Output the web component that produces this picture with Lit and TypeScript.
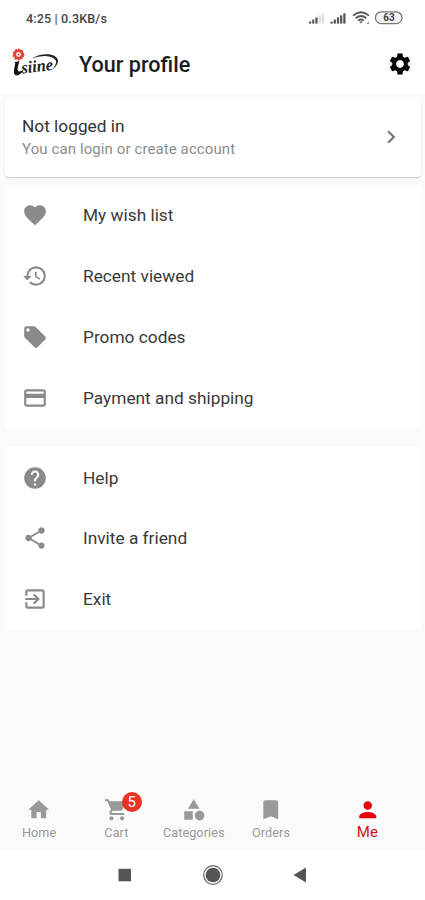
import { LitElement, html, css, svg } from "lit";
import { customElement, property } from "lit/decorators.js";

const PATHS: Record<string, string> = {
  heart: "M12 21.35l-1.45-1.32C5.4 15.36 2 12.28 2 8.5 2 5.42 4.42 3 7.5 3c1.74 0 3.41.81 4.5 2.09C13.09 3.81 14.76 3 16.5 3 19.58 3 22 5.42 22 8.5c0 3.78-3.4 6.86-8.55 11.54L12 21.35z",
  history: "M13 3a9 9 0 0 0-9 9H1l3.89 3.89.07.14L9 12H6c0-3.87 3.13-7 7-7s7 3.13 7 7-3.13 7-7 7c-1.93 0-3.68-.79-4.94-2.06l-1.42 1.42A8.954 8.954 0 0 0 13 21a9 9 0 0 0 0-18zm-1 5v5l4.28 2.54.72-1.21-3.5-2.08V8H12z",
  tag: "M21.41 11.58l-9-9C12.05 2.22 11.55 2 11 2H4c-1.1 0-2 .9-2 2v7c0 .55.22 1.05.59 1.42l9 9c.36.36.86.58 1.41.58.55 0 1.05-.22 1.41-.59l7-7c.37-.36.59-.86.59-1.41 0-.55-.23-1.06-.59-1.42zM5.5 7C4.67 7 4 6.33 4 5.5S4.67 4 5.5 4 7 4.67 7 5.5 6.33 7 5.5 7z",
  card: "M20 4H4c-1.11 0-1.99.89-1.99 2L2 18c0 1.11.89 2 2 2h16c1.11 0 2-.89 2-2V6c0-1.11-.89-2-2-2zm0 14H4v-6h16v6zm0-10H4V6h16v2z",
  help: "M12 2C6.48 2 2 6.48 2 12s4.48 10 10 10 10-4.48 10-10S17.52 2 12 2zm1 17h-2v-2h2v2zm2.07-7.75l-.9.92C13.45 12.9 13 13.5 13 15h-2v-.5c0-1.1.45-2.1 1.17-2.83l1.24-1.26c.37-.36.59-.86.59-1.41 0-1.1-.9-2-2-2s-2 .9-2 2H8c0-2.21 1.79-4 4-4s4 1.79 4 4c0 .88-.36 1.68-.93 2.25z",
  share: "M18 16.08c-.76 0-1.44.3-1.96.77L8.91 12.7c.05-.23.09-.46.09-.7s-.04-.47-.09-.7l7.05-4.11c.54.5 1.25.81 2.04.81 1.66 0 3-1.34 3-3s-1.34-3-3-3-3 1.34-3 3c0 .24.04.47.09.7L8.04 9.81C7.5 9.31 6.79 9 6 9c-1.66 0-3 1.34-3 3s1.34 3 3 3c.79 0 1.5-.31 2.04-.81l7.12 4.16c-.05.21-.08.43-.08.65 0 1.61 1.31 2.92 2.92 2.92s2.92-1.31 2.92-2.92-1.31-2.92-2.92-2.92z",
  exit: "M10.09 15.59L11.5 17l5-5-5-5-1.41 1.41L12.67 11H3v2h9.67l-2.58 2.59zM19 3H5c-1.11 0-2 .9-2 2v4h2V5h14v14H5v-4H3v4c0 1.1.89 2 2 2h14c1.1 0 2-.9 2-2V5c0-1.1-.9-2-2-2z",
  home: "M10 20v-6h4v6h5v-8h3L12 3 2 12h3v8z",
  cart: "M7 18c-1.1 0-1.99.9-1.99 2S5.9 22 7 22s2-.9 2-2-.9-2-2-2zM1 2v2h2l3.6 7.59-1.35 2.45c-.16.28-.25.61-.25.96 0 1.1.9 2 2 2h12v-2H7.42c-.14 0-.25-.11-.25-.25l.03-.12.9-1.63h7.45c.75 0 1.41-.41 1.75-1.03l3.58-6.49c.08-.14.12-.31.12-.48 0-.55-.45-1-1-1H5.21l-.94-2H1zm16 16c-1.1 0-1.99.9-1.99 2s.89 2 1.99 2 2-.9 2-2-.9-2-2-2z",
  category: "M12 2l-5.5 9h11zM17.5 13a4.5 4.5 0 1 0 0 9 4.5 4.5 0 0 0 0-9zM3 13.5h8v8H3z",
  bookmark: "M17 3H7c-1.1 0-1.99.9-1.99 2L5 21l7-3 7 3V5c0-1.1-.9-2-2-2z",
  person: "M12 12c2.21 0 4-1.79 4-4s-1.79-4-4-4-4 1.79-4 4 1.79 4 4 4zm0 2c-2.67 0-8 1.34-8 4v2h16v-2c0-2.66-5.33-4-8-4z",
  chevron: "M10 6L8.59 7.41 13.17 12l-4.58 4.59L10 18l6-6z",
  gear: "M19.14 12.94c.04-.3.06-.61.06-.94 0-.32-.02-.64-.07-.94l2.03-1.58c.18-.14.23-.41.12-.61l-1.92-3.32c-.12-.22-.37-.29-.59-.22l-2.39.96c-.5-.38-1.03-.7-1.62-.94l-.36-2.54c-.04-.24-.24-.41-.48-.41h-3.84c-.24 0-.43.17-.47.41l-.36 2.54c-.59.24-1.13.57-1.62.94l-2.39-.96c-.22-.08-.47 0-.59.22L2.74 8.87c-.12.21-.08.47.12.61l2.03 1.58c-.05.3-.09.63-.09.94s.02.64.07.94l-2.03 1.58c-.18.14-.23.41-.12.61l1.92 3.32c.12.22.37.29.59.22l2.39-.96c.5.38 1.03.7 1.62.94l.36 2.54c.05.24.24.41.48.41h3.84c.24 0 .44-.17.47-.41l.36-2.54c.59-.24 1.13-.56 1.62-.94l2.39.96c.22.08.47 0 .59-.22l1.92-3.32c.12-.22.07-.47-.12-.61l-2.01-1.58zM12 15.6c-1.98 0-3.6-1.62-3.6-3.6s1.62-3.6 3.6-3.6 3.6 1.62 3.6 3.6-1.62 3.6-3.6 3.6z",
};

@customElement("md-icon")
export class MdIcon extends LitElement {
  @property() name = "";
  static styles = css`
    :host { display: block; width: 26px; height: 26px; flex: none; }
    svg { display: block; width: 100%; height: 100%; fill: currentColor; }
  `;
  render() {
    return html`<svg viewBox="0 0 24 24"><path d=${PATHS[this.name]} /></svg>`;
  }
}

@customElement("status-bar")
export class StatusBar extends LitElement {
  static styles = css`
    :host { display: flex; height: 36px; box-sizing: border-box; align-items: center; padding: 0 22px 0 26px; color: #444; }
    .time { flex: 1; font-size: 12.6px; font-weight: 500; white-space: pre; letter-spacing: 0.12px; }
    svg { display: block; }
    .pct { font: 700 10px Roboto, sans-serif; }
  `;
  private bars(x: number, faint: number) {
    return [0, 1, 2, 3, 4].map((i) => {
      const h = 2 + i * 2.1;
      return svg`<rect x=${x + i * 3.2} y=${13.6 - h} width="2.2" height=${h} fill=${i >= faint ? "#ddd" : "#555"} />`;
    });
  }
  render() {
    return html`
      <span class="time">4:25 | 0.3KB/s</span>
      <svg width="95" height="16" viewBox="0 0 95 16">
        ${this.bars(1, 3)} ${this.bars(22.5, 5)}
        <g fill="none" stroke="#555" stroke-width="1.8">
          <path d="M45 5.6Q53 -1 61 5.6" />
          <path d="M47.7 8.2Q53 3.8 58.3 8.2" />
          <path d="M50.2 10.6Q53 8.4 55.8 10.6" />
        </g>
        <path d="M51.2 11.5h3.6L53 13.5z" fill="#555" />
        <path d="M58.5 14l2.4-2.4v2.4z" fill="#888" />
        <rect x="67.4" y="1.8" width="26.6" height="11.8" rx="5.9" fill="#f3f3f3" stroke="#777" stroke-width="1.3" />
        <text class="pct" x="81" y="11.3" text-anchor="middle" fill="#444">63</text>
      </svg>
    `;
  }
}

@customElement("brand-logo")
export class BrandLogo extends LitElement {
  static styles = css`
    :host { display: block; width: 50px; height: 34px; }
    svg { display: block; overflow: visible; }
    .word { font: italic 700 17px "Liberation Serif", serif; }
  `;
  render() {
    return html`
      <svg width="50" height="34" viewBox="0 0 50 34">
        <circle cx="6.5" cy="7.5" r="5" fill="none" stroke="#e4503c" stroke-width="1.8" stroke-dasharray="2.4 0.8" />
        <circle cx="6.5" cy="7.5" r="3.6" fill="#fff" stroke="#dc4430" stroke-width="2.4" />
        <circle cx="6.5" cy="7.5" r="1" fill="#dc4430" />
        <path d="M2.2 15.2Q5 15 7.4 14Q5.2 21 5.7 23.6Q7 26 12 22.2Q8.4 28.3 4.8 28.5Q1.2 28.2 2.1 22.4Q2.6 18.6 3.4 16.4Z" fill="#111" />
        <text class="word" x="10" y="26.4" textLength="31.5" lengthAdjust="spacingAndGlyphs" fill="#222" transform="rotate(-6 10 26.4)">siine</text>
        <path d="M19.5 11.5Q28 6.4 37 7.3Q46.5 8.9 46 14.6Q45.2 19.4 40 22.4Q44.8 17.6 44 13.8Q42 9.4 33 8.9Q26 8.8 19.5 11.5Z" fill="#222" />
      </svg>
    `;
  }
}

@customElement("menu-group")
export class MenuGroup extends LitElement {
  @property({ attribute: false }) items: { icon: string; label: string }[] = [];
  static styles = css`
    :host { display: block; background: #fff; border-radius: 3px; }
    .row { display: flex; align-items: center; height: 60.8px; padding-left: 17px; gap: 35px; }
    md-icon { color: #8a8a8a; }
    .label { font-size: 17.3px; color: #3a3a3a; white-space: nowrap; }
  `;
  render() {
    return this.items.map(
      (i) => html`<div class="row"><md-icon name=${i.icon}></md-icon><span class="label">${i.label}</span></div>`
    );
  }
}

@customElement("tab-bar")
export class TabBar extends LitElement {
  static styles = css`
    :host { display: flex; height: 69px; color: #999; padding-left: 0.5px; }
    .tab { width: 77.3px; display: flex; flex-direction: column; align-items: center; padding-top: 15px; box-sizing: border-box; }
    .tab.active { flex: 1; color: #e8000d; }
    .icon { position: relative; }
    md-icon { width: 25.5px; height: 25.5px; }
    .label { font-size: 12.6px; line-height: 16px; margin-top: 2px; letter-spacing: 0.1px; white-space: nowrap; }
    .active .label { font-size: 15px; margin-top: 1px; color: #cf1020; }
    .badge { position: absolute; left: 18px; top: -5px; width: 20px; height: 20px; border-radius: 50%; background: #ea3323; color: #fff; font-size: 15px; line-height: 20px; text-align: center; }
  `;
  render() {
    const tabs = [
      ["home", "Home"],
      ["cart", "Cart", "5"],
      ["category", "Categories"],
      ["bookmark", "Orders"],
      ["person", "Me"],
    ];
    return tabs.map(
      ([icon, label, badge]) => html`
        <div class="tab ${label === "Me" ? "active" : ""}">
          <div class="icon">
            <md-icon name=${icon}></md-icon>
            ${badge ? html`<span class="badge">${badge}</span>` : ""}
          </div>
          <span class="label">${label}</span>
        </div>
      `
    );
  }
}

@customElement("app-root")
export class AppRoot extends LitElement {
  static styles = css`
    :host { display: flex; flex-direction: column; height: 900px; background: #fafafa; font-family: Roboto, sans-serif; overflow: hidden; }
    .top { background: #fff; height: 94px; flex: none; }
    header { display: flex; align-items: center; height: 56px; padding: 0 12px; }
    h1 { flex: 1; margin: 0 0 0 17px; font-size: 21.6px; font-weight: 500; color: #1c1c1c; white-space: nowrap; }
    header md-icon { color: #000; }
    main { flex: 1; padding: 4px 4px 0 5px; }
    .login { display: flex; align-items: center; justify-content: space-between; height: 79px; box-sizing: border-box; padding: 0 17px 1px; background: #fff; border-radius: 4px; box-shadow: 0 1px 1.5px rgba(0, 0, 0, 0.2); }
    .name { font-size: 17.3px; line-height: 22px; color: #333; }
    .hint { font-size: 15px; line-height: 22px; padding-top: 1px; color: #8c8c8c; letter-spacing: 0.1px; }
    .login md-icon { color: #777; }
    .first { margin-top: 8px; }
    .second { margin-top: 19px; }
    .system { height: 49px; flex: none; background: #fff; display: flex; justify-content: center; }
    .system svg { display: block; }
  `;
  render() {
    return html`
      <div class="top">
        <status-bar></status-bar>
        <header>
          <brand-logo></brand-logo>
          <h1>Your profile</h1>
          <md-icon name="gear"></md-icon>
        </header>
      </div>
      <main>
        <div class="login">
          <div>
            <div class="name">Not logged in</div>
            <div class="hint">You can login or create account</div>
          </div>
          <md-icon name="chevron"></md-icon>
        </div>
        <menu-group
          class="first"
          .items=${[
            { icon: "heart", label: "My wish list" },
            { icon: "history", label: "Recent viewed" },
            { icon: "tag", label: "Promo codes" },
            { icon: "card", label: "Payment and shipping" },
          ]}
        ></menu-group>
        <menu-group
          class="second"
          .items=${[
            { icon: "help", label: "Help" },
            { icon: "share", label: "Invite a friend" },
            { icon: "exit", label: "Exit" },
          ]}
        ></menu-group>
      </main>
      <tab-bar></tab-bar>
      <div class="system">
        <svg width="425" height="49" viewBox="0 0 425 49" fill="#555">
          <rect x="118.5" y="17.8" width="12.5" height="12.5" />
          <circle cx="213" cy="24" r="7.3" />
          <circle cx="213" cy="24" r="9.3" fill="none" stroke="#666" stroke-width="1.2" />
          <path d="M293.5 24L306 16.5V31.5Z" />
        </svg>
      </div>
    `;
  }
}
